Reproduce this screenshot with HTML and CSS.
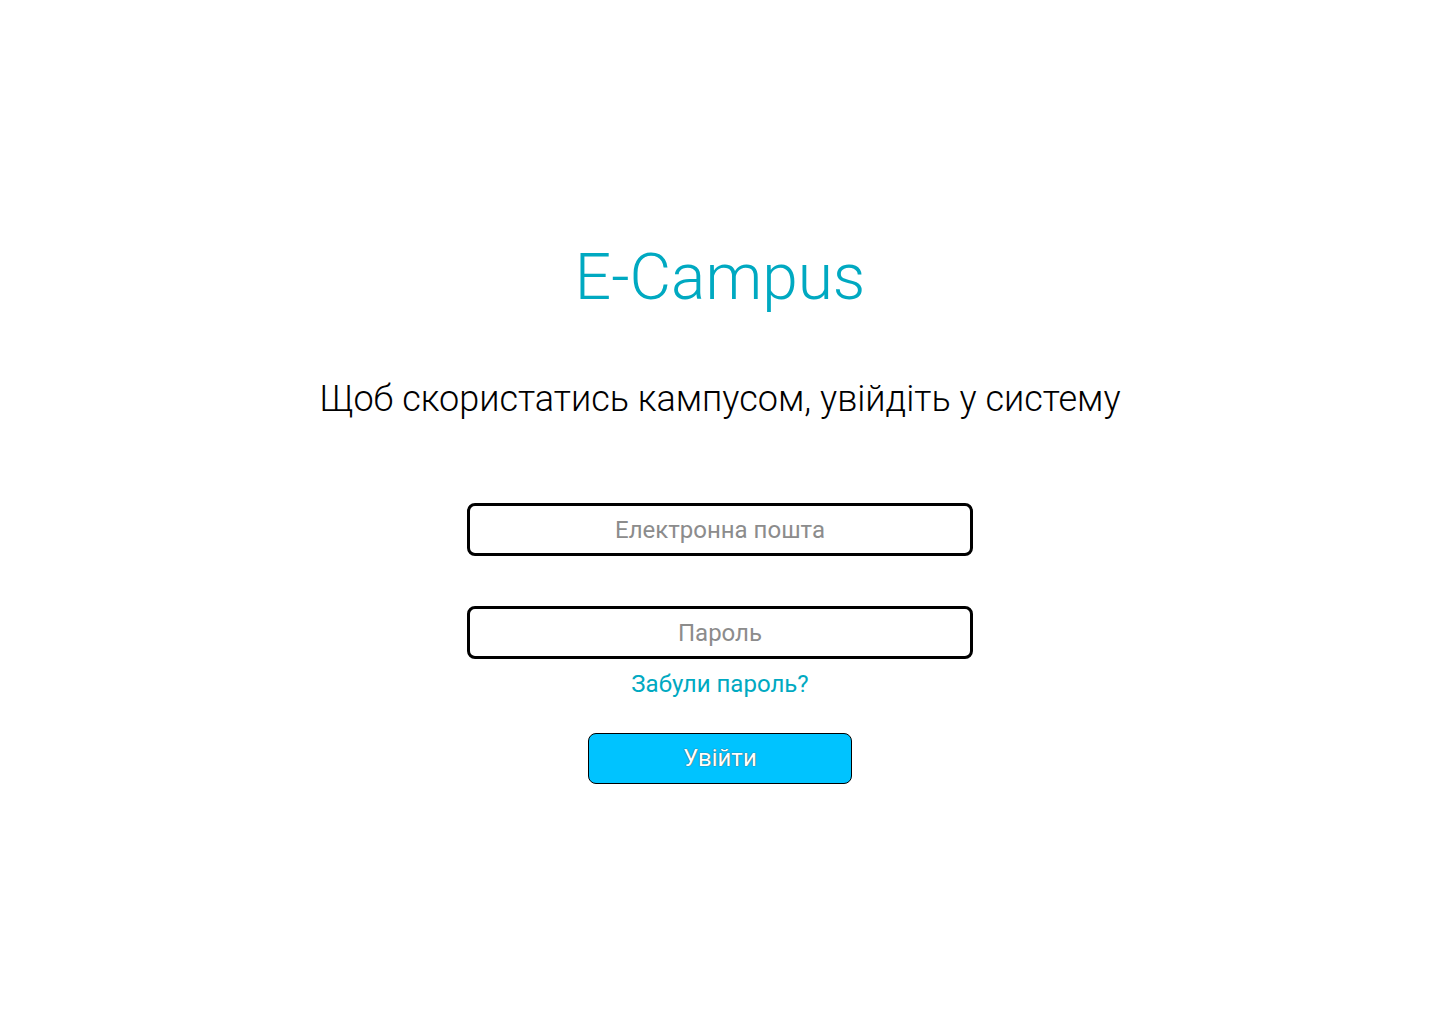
FILE: index.html
```html
<!DOCTYPE html>
<html lang="uk">
<head>
<meta charset="utf-8">
<title>E-Campus</title>
<link rel="stylesheet" href="styles.css">
</head>
<body>
<main class="page">
  <h1 class="logo">E-Campus</h1>
  <p class="subtitle">Щоб скористатись кампусом, увійдіть у систему</p>
  <form class="form">
    <input class="field" type="email" placeholder="Електронна пошта">
    <input class="field field-password" type="password" placeholder="Пароль">
    <a class="forgot" href="#">Забули пароль?</a>
    <button class="submit" type="button">Увійти</button>
  </form>
</main>
</body>
</html>
```
FILE: styles.css
```css
html, body {
  margin: 0;
  padding: 0;
  background: #ffffff;
  font-family: Roboto, "Noto Sans", sans-serif;
}
.page {
  display: flex;
  flex-direction: column;
  align-items: center;
  padding-top: 238px;
}
.logo {
  margin: 0;
  font-weight: 300;
  font-size: 64px;
  line-height: 80px;
  color: #00a9c1;
}
.subtitle {
  margin: 59px 0 0;
  font-weight: 300;
  font-size: 36px;
  line-height: 44px;
  color: #000;
}
.form {
  margin-top: 82px;
  display: flex;
  flex-direction: column;
  align-items: center;
}
.field {
  box-sizing: border-box;
  width: 506px;
  height: 53px;
  border: 3px solid #000;
  border-radius: 8px;
  text-align: center;
  font-family: Roboto, sans-serif;
  font-size: 24px;
  color: #000;
  background: #fff;
  outline: none;
}
.field::placeholder {
  color: #8c8c8c;
}
.field-password {
  margin-top: 50px;
}
.forgot {
  margin-top: 10px;
  font-size: 24px;
  line-height: 30px;
  color: #00a9c1;
  text-decoration: none;
}
.submit {
  margin-top: 34px;
  box-sizing: border-box;
  width: 264px;
  height: 51px;
  padding: 0 0 2px;
  border: 1px solid #000;
  border-radius: 8px;
  background: #00c3ff;
  color: #fff;
  font-family: Roboto, sans-serif;
  font-size: 24px;
  text-shadow: 0 0 1px #555, 0 0 1px #555;
  cursor: pointer;
}
```
